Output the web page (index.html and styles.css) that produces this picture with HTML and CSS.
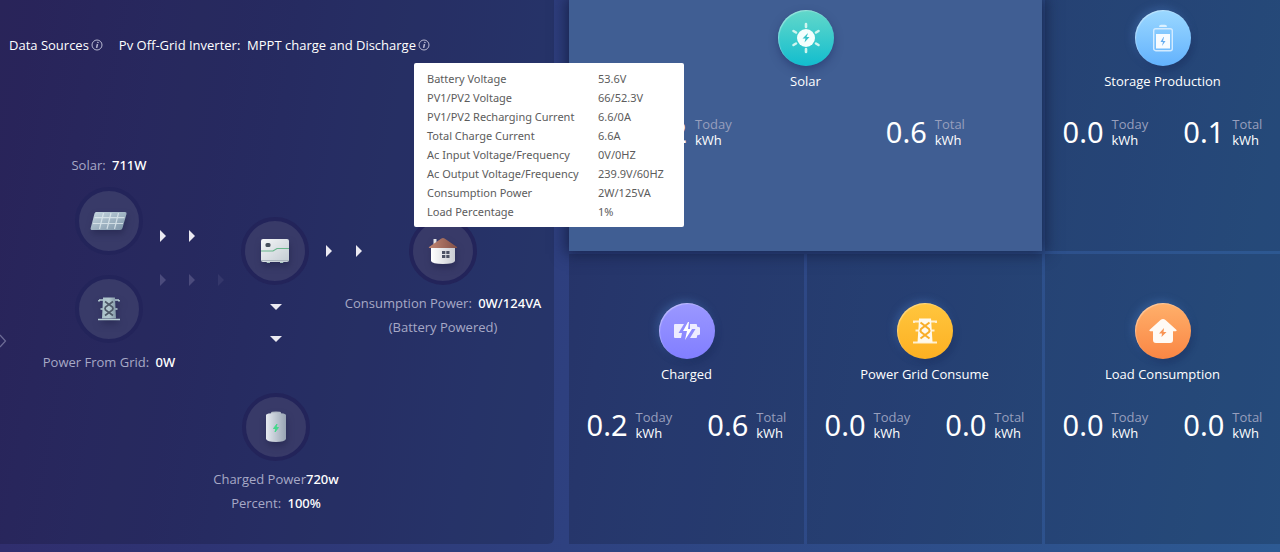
FILE: index.html
```html
<!DOCTYPE html>
<html lang="en">
<head>
<meta charset="utf-8">
<meta name="viewport" content="width=device-width, initial-scale=1">
<title>Energy overview</title>
<link rel="stylesheet" href="styles.css">
</head>
<body>
<svg class="defs" aria-hidden="true">
  <defs>
    <linearGradient id="metal" x1="0" y1="0" x2="1" y2="1"><stop offset="0" stop-color="#c8d9e2"/><stop offset="1" stop-color="#7a91a5"/></linearGradient>
    <linearGradient id="steel" x1="0" y1="0" x2="1" y2="0"><stop offset="0" stop-color="#a9c2c8"/><stop offset=".5" stop-color="#b3c8cf"/><stop offset="1" stop-color="#8297a6"/></linearGradient>
    <linearGradient id="shell" x1="0" y1="0" x2="1" y2="1"><stop offset="0" stop-color="#f4f6f7"/><stop offset="1" stop-color="#c3cbd2"/></linearGradient>
    <linearGradient id="wall" x1="0" y1="0" x2="1" y2="0"><stop offset="0" stop-color="#fff"/><stop offset="1" stop-color="#c9cbd2"/></linearGradient>
    <linearGradient id="roof" x1="0" y1="0" x2="1" y2="0"><stop offset="0" stop-color="#c28672"/><stop offset="1" stop-color="#825048"/></linearGradient>
    <linearGradient id="cell" x1="0" y1="0" x2="1" y2="0"><stop offset="0" stop-color="#e6eaf0"/><stop offset="1" stop-color="#98a4b3"/></linearGradient>
    <symbol id="arrow" viewBox="0 0 6 12"><path d="M0 0 6 6 0 12z" fill="currentColor"/></symbol>
    <symbol id="info" viewBox="0 0 12 12"><circle cx="6" cy="6" r="5" fill="none" stroke="currentColor"/><path d="M6.500 5 5.600 8.800M7 2.900 6.800 4" stroke="currentColor" stroke-width="1.500" fill="none"/></symbol>
  </defs>
</svg>
<main class="dashboard">
  <section class="panel flow">
    <header class="flow-head">
      <span class="source">Data Sources <button class="info" type="button" aria-label="About data sources"><svg><use href="#info"/></svg></button></span>
      <span class="source">Pv Off-Grid Inverter:&nbsp; MPPT charge and Discharge <button class="info" type="button" aria-label="Inverter details" aria-describedby="details"><svg><use href="#info"/></svg></button></span>
    </header>

    <div class="node node-solar">
      <p class="label">Solar: <b>711W</b></p>
      <div class="disc"><svg width="38" height="20" viewBox="0 0 38 20"><path d="M6 1h29q2 0 1.500 2l-4 14q-.5 2-2.500 2H2.500Q0 19 .7 17L4.500 2.500Q5 1 6 1z" fill="url(#metal)"/><path d="M13.500 2 9.500 18M21 2l-4 16M28.500 2l-4 16M4.500 6.700h30M3 12.500h30" stroke="#e3edf1" stroke-width="1.200" opacity=".75"/></svg></div>
    </div>
    <div class="node node-grid">
      <div class="disc"><svg width="22" height="24" viewBox="0 0 22 24"><path d="M1 3h20M2.500 12h17M0 22.500h22M1 3v1.500M21 3v1.500" stroke="#b7cdd3" stroke-width="1.700" fill="none"/><path d="M5 .5h12l1 21H4z" fill="url(#steel)"/><path d="m7 4.500 7.500 5.500q1 1.500 0 3L7 18.500M15 4.500 7.500 10q-1 1.500 0 3l7.500 5.500" stroke="#4e5968" stroke-width="1.700" fill="none"/></svg></div>
      <p class="label">Power From Grid: <b>0W</b></p>
    </div>
    <div class="node node-inverter">
      <div class="disc"><svg width="30" height="26" viewBox="0 0 30 26"><path d="M6 23h4v2H7zM20 23h4l-1 2h-3z" fill="#a6c4bd"/><rect x="1" y="1" width="28" height="23" rx="2" fill="url(#shell)"/><path d="M1 22.500h28" stroke="#a9b3bb"/><path d="M1 13h12l4-2.500h12" fill="none" stroke="#68b68b" stroke-width="1.200"/><rect x="5.500" y="5" width="5" height="4" rx="1.500" fill="#46505c"/></svg></div>
    </div>
    <div class="node node-home">
      <div class="disc"><svg width="30" height="28" viewBox="0 0 30 28"><path d="M5.500 2h3v7h-3z" fill="#e1e2e6"/><path d="M3 11h24v13q-1 3-12 3T3 24z" fill="url(#wall)"/><path d="M15 1q1 0 2 .8L29 10q1 1-1 1H2q-2 0-1-1L13 1.800Q14 1 15 1z" fill="url(#roof)"/><path d="M14 14h3.300v3H14zm4.300 0h3.200v3h-3.200zM14 18h3.300v3H14zm4.300 0h3.200v3h-3.200z" fill="#4c5264"/></svg></div>
      <p class="label">Consumption Power: <b>0W/124VA</b></p>
      <p class="label">(Battery Powered)</p>
    </div>
    <div class="node node-battery">
      <div class="disc"><svg width="22" height="32" viewBox="0 0 22 32"><path d="M6 3V1.500Q6 .5 11 .5t5 1V3z" fill="#b2bac5"/><path d="M1 4q0-2 10-2t10 2v24q-1 3-10 3T1 28z" fill="url(#cell)"/><path d="m12 13-3.500 4.500H11L10 21l3.500-4.500H11l1-3.500z" fill="#45d88b" stroke="#45d88b"/></svg></div>
      <p class="label tight">Charged Power<b>720w</b></p>
      <p class="label">Percent: <b>100%</b></p>
    </div>

    <div class="run run-solar"><svg><use href="#arrow"/></svg><svg><use href="#arrow"/></svg></div>
    <div class="run run-grid"><svg><use href="#arrow"/></svg><svg><use href="#arrow"/></svg><svg class="faint"><use href="#arrow"/></svg></div>
    <div class="run run-home"><svg><use href="#arrow"/></svg><svg><use href="#arrow"/></svg></div>
    <div class="run run-down"><svg viewBox="0 0 12 6"><path d="M0 0h12L6 6z" fill="currentColor"/></svg><svg viewBox="0 0 12 6"><path d="M0 0h12L6 6z" fill="currentColor"/></svg></div>
    <button class="expand" type="button" aria-label="Expand"><svg width="7" height="14" viewBox="0 0 7 14"><path d="m0 1 5.500 6L0 13" fill="none" stroke="currentColor" stroke-width="1.200"/></svg></button>

    <div class="tooltip" role="tooltip" id="details">
      <table>
        <tr><th scope="row">Battery Voltage</th><td>53.6V</td></tr>
        <tr><th scope="row">PV1/PV2 Voltage</th><td>66/52.3V</td></tr>
        <tr><th scope="row">PV1/PV2 Recharging Current</th><td>6.6/0A</td></tr>
        <tr><th scope="row">Total Charge Current</th><td>6.6A</td></tr>
        <tr><th scope="row">Ac Input Voltage/Frequency</th><td>0V/0HZ</td></tr>
        <tr><th scope="row">Ac Output Voltage/Frequency</th><td>239.9V/60HZ</td></tr>
        <tr><th scope="row">Consumption Power</th><td>2W/125VA</td></tr>
        <tr><th scope="row">Load Percentage</th><td>1%</td></tr>
      </table>
    </div>
  </section>

  <section class="stats">
    <article class="card wide active">
      <div class="badge teal"><svg width="32" height="32" viewBox="0 0 32 32"><path d="M16 2v3M16 27v3M3.500 9l2.500 1.500M26 21.500l2.500 1.500M3.500 23l2.500-1.500M26 10.500l2.500-1.500" stroke="#cff5ef" stroke-width="2.600" stroke-linecap="round"/><circle cx="16" cy="16" r="9" fill="#f3fffd"/><path d="m17.500 11.500-5 5h3l-1 4 5-5.500h-3l1.500-3.500z" fill="#35c4c9"/></svg></div>
      <h2>Solar</h2>
      <div class="figures">
        <div class="figure"><strong>0.2</strong><span><small>Today</small>kWh</span></div>
        <div class="figure"><strong>0.6</strong><span><small>Total</small>kWh</span></div>
      </div>
    </article>
    <article class="card">
      <div class="badge sky"><svg width="22" height="28" viewBox="0 0 22 28"><path d="M7 3Q7 .8 9 .8h4q2 0 2 2.200z" fill="#dcf1ff"/><rect x="1.700" y="4.700" width="18.600" height="22" rx="2" fill="none" stroke="#d3ebff" stroke-width="1.400"/><path d="M4 10h14v14.500H4z" fill="#f7fbff"/><path d="m11.500 13-3 5H11l-1 4 3.500-5H11l1-4z" fill="#64acf0"/></svg></div>
      <h2>Storage Production</h2>
      <div class="figures">
        <div class="figure"><strong>0.0</strong><span><small>Today</small>kWh</span></div>
        <div class="figure"><strong>0.1</strong><span><small>Total</small>kWh</span></div>
      </div>
    </article>
    <article class="card">
      <div class="badge violet"><svg width="28" height="20" viewBox="0 0 28 20"><path d="M2 3h9L5.500 12H9l-1 5H2q-1 0-1-1V4q0-1 1-1zM17 3h6q1 0 1 1v1.500l3 1v7l-3 1V16q0 1-1 1h-6l5.500-9H17z" fill="#edecff"/><path d="m15 1-5 9h4l-2 9 7-11h-4l1-7z" fill="#fff"/></svg></div>
      <h2>Charged</h2>
      <div class="figures">
        <div class="figure"><strong>0.2</strong><span><small>Today</small>kWh</span></div>
        <div class="figure"><strong>0.6</strong><span><small>Total</small>kWh</span></div>
      </div>
    </article>
    <article class="card">
      <div class="badge amber"><svg width="24" height="26" viewBox="0 0 24 26"><path d="M0 3.500h24M2.500 12.500h19M0 24.500h24M1 3v2M23 3v2" stroke="#fff0d0" stroke-width="1.800" fill="none"/><path d="M6 .5h12l1.500 24h-15z" fill="#fff9eb"/><path d="m7.500 4.500 8.500 6.500q1 1.500 0 3l-8.500 6.500M16.500 4.500 8 11q-1 1.500 0 3l8.500 6.500" stroke="#f9ae29" stroke-width="2" fill="none"/></svg></div>
      <h2>Power Grid Consume</h2>
      <div class="figures">
        <div class="figure"><strong>0.0</strong><span><small>Today</small>kWh</span></div>
        <div class="figure"><strong>0.0</strong><span><small>Total</small>kWh</span></div>
      </div>
    </article>
    <article class="card">
      <div class="badge orange"><svg width="28" height="26" viewBox="0 0 28 26"><path d="M14 1q1.300 0 2.500 1L27 11.500q1.500 1.500-.5 1.800H24V22q0 3-3 3H7q-3 0-3-3v-8.700H1.500q-2-.3-.5-1.800L11.500 2Q12.700 1 14 1z" fill="#fffaf5"/><path d="m15 10-5 5.500h3L12.500 19l5-5h-3z" fill="#f89455"/></svg></div>
      <h2>Load Consumption</h2>
      <div class="figures">
        <div class="figure"><strong>0.0</strong><span><small>Today</small>kWh</span></div>
        <div class="figure"><strong>0.0</strong><span><small>Total</small>kWh</span></div>
      </div>
    </article>
  </section>
</main>
</body>
</html>
```

FILE: styles.css
```css
* { box-sizing: border-box; }
body {
  margin: 0;
  min-height: 100vh;
  color: #fff;
  font: 13px/20px "Open Sans", "Noto Sans", sans-serif;
  background: linear-gradient(100deg, #312b6b 0%, #2e3474 22%, #2e4180 48%, #2d5a93 100%);
}
p, h2 { margin: 0; }
button { padding: 0; border: 0; background: none; color: inherit; cursor: pointer; }
.defs { position: absolute; width: 0; height: 0; }

.dashboard {
  display: grid;
  grid-template-columns: 554fr 711fr;
  gap: 15px;
  min-height: 100vh;
  padding-bottom: 8px;
}
.panel {
  position: relative;
  background: rgba(0, 0, 0, .16);
  border-radius: 0 0 6px 0;
}

.flow-head { display: flex; gap: 16px; padding: 35px 9px 0; }
.source { display: flex; align-items: center; gap: 2px; white-space: nowrap; }
.info { display: flex; color: #b9b9d2; }
.info svg { width: 12px; height: 12px; }

.node {
  position: absolute;
  width: 220px;
  margin-left: -110px;
  display: flex;
  flex-direction: column;
  align-items: center;
}
.disc {
  width: 68px;
  height: 68px;
  display: grid;
  place-items: center;
  border: 4px solid #23245a;
  border-radius: 50%;
  background: #383a68;
}
.disc svg { filter: drop-shadow(1px 4px 3px rgba(30, 32, 70, .5)); }
.label { color: #a7a9c6; white-space: nowrap; }
.label b { color: #fff; font-family: "Noto Sans", sans-serif; font-weight: 500; margin-left: 3px; }
.label.tight b { margin-left: 0; }
.node-solar { left: 109px; top: 155px; gap: 12px; }
.node-grid { left: 109px; top: 275px; gap: 9px; }
.node-inverter { left: 275px; top: 217px; }
.node-home { left: 443px; top: 217px; gap: 4px; }
.node-home .disc, .node-battery .disc { margin-bottom: 4px; }
.node-battery { left: 276px; top: 393px; gap: 4px; }

.run { position: absolute; display: flex; gap: 23px; color: #ebeaf2; }
.run svg { width: 6px; height: 12px; }
.run-solar { left: 160px; top: 230px; }
.run-grid { left: 160px; top: 274px; color: #4b4b7c; }
.run-grid .faint { opacity: .4; }
.run-home { left: 326px; top: 245px; gap: 24px; }
.run-down { left: 270px; top: 304px; flex-direction: column; gap: 26px; }
.run-down svg { width: 12px; height: 6px; }
.expand { position: absolute; left: 0; top: 334px; display: flex; color: #6d6c96; }

.tooltip {
  position: absolute;
  z-index: 3;
  left: 414px;
  top: 63px;
  width: 270px;
  padding: 6px 13px;
  border-radius: 2px;
  background: #fff;
  color: #5c5c5c;
}
.tooltip table { width: 100%; border-collapse: collapse; font: 11px/19px "Noto Sans", sans-serif; }
.tooltip th, .tooltip td { padding: 0; text-align: left; font-weight: 400; white-space: nowrap; }
.tooltip th { width: 171px; }

.stats {
  display: grid;
  grid-template-columns: repeat(3, 1fr);
  grid-template-rows: 251fr 290fr;
  gap: 3px;
}
.card {
  display: flex;
  flex-direction: column;
  align-items: center;
  padding: 49px 0 0;
  background: rgba(0, 0, 0, .16);
}
.card:nth-child(-n+2) { padding-top: 10px; }
.wide { grid-column: span 2; }
.active { position: relative; z-index: 1; background: #405e93; box-shadow: 0 0 14px 3px rgba(18, 27, 62, .8); }
.badge {
  width: 56px;
  height: 56px;
  display: grid;
  place-items: center;
  border-radius: 50%;
  box-shadow: inset 1px 1px 1px rgba(255, 255, 255, .35), 2px 4px 6px rgba(20, 35, 80, .4), -2px -2px 8px rgba(80, 130, 200, .4);
}
.active .badge { box-shadow: inset 1px 1px 1px rgba(255, 255, 255, .35), 0 4px 8px rgba(30, 45, 100, .5); }
.teal { background: linear-gradient(#63d8ca, #12bdce); }
.sky { background: linear-gradient(#9bd8ff, #63b2fd); }
.violet { background: linear-gradient(#9b98ff, #817eff); }
.amber { background: linear-gradient(#ffc63e, #fdb022); }
.orange { background: linear-gradient(#ffb06b, #fa8644); }
.card h2 { margin-top: 5px; font-size: 13px; line-height: 20px; font-weight: 400; }
.figures { display: flex; justify-content: space-around; width: 100%; margin-top: 25px; }
.figure { display: flex; align-items: center; gap: 8px; }
.figure strong { font: 400 29px/32px "Noto Sans", sans-serif; }
.figure span { font-weight: 500; line-height: 16px; }
.figure small { display: block; color: #979fbd; font-size: 13px; font-weight: 400; }
```
